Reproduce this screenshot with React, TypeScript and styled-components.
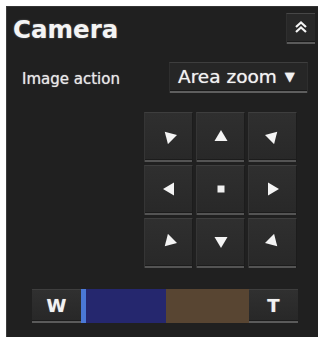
import React from "react";
import styled, { createGlobalStyle } from "styled-components";

const Global = createGlobalStyle`
  html, body { margin: 0; padding: 0; background: #202020; }
  body { overflow: hidden; }
`;

const Frame = styled.div`
  border-top: 6px solid #ffffff;
  border-left: 6px solid #ffffff;
  min-height: 337px;
  box-sizing: border-box;
  background: #202020;
`;

const Panel = styled.div`
  min-height: 331px;
  box-sizing: border-box;
  background: #202020;
  border-left: 1px solid #3c3c3c;
  border-top: 1px solid #343434;
  display: flex;
  flex-direction: column;
  width: 312px;
  font-family: "DejaVu Sans", Verdana, sans-serif;
  color: #f2f2f2;
`;

const Header = styled.div`
  display: flex;
  justify-content: space-between;
  align-items: flex-start;
  padding: 6px 3px 0 6px;
`;

const Title = styled.div`
  margin-top: 5px;
  font-size: 24.5px;
  line-height: 24px;
  font-weight: bold;
  color: #f4f4f4;
  text-shadow: 0 0 2px rgba(255, 255, 255, 0.35);
`;

const Collapse = styled.div`
  width: 29px;
  height: 31px;
  box-sizing: border-box;
  background: #282828;
  border-top: 1px solid #474747;
  border-left: 1px solid #2f2f2f;
  box-shadow: inset 0 -2px 0 #5a5a5a, inset 0 -3px 0 #1a1a1a;
  display: flex;
  justify-content: center;
  padding-top: 6px;
`;

const ActionRow = styled.div`
  display: flex;
  align-items: center;
  justify-content: space-between;
  padding: 18px 10px 0 15px;
`;

const Label = styled.div`
  font-size: 15px;
  line-height: 18px;
  color: #e8e8e8;
  margin-top: 2px;
  text-shadow: 0 0 1px rgba(255, 255, 255, 0.7);
`;

const Select = styled.div`
  width: 139px;
  height: 31px;
  box-sizing: border-box;
  background: #262626;
  border-top: 1px solid #3e3e3e;
  border-left: 1px solid #2e2e2e;
  border-right: 1px solid #2e2e2e;
  box-shadow: inset 0 -2px 0 #5e5e5e, inset 0 -3px 0 #1a1a1a;
  display: flex;
  align-items: center;
  padding: 0 0 3px 8px;
  gap: 8px;
  font-size: 18.5px;
  color: #f2f2f2;
  text-shadow: 0 0 1px rgba(255, 255, 255, 0.7);
`;

const Caret = styled.span`
  font-size: 13px;
  line-height: 13px;
`;

const PadRow = styled.div`
  display: flex;
  justify-content: flex-end;
  padding: 19px 21px 0 0;
`;

const Pad = styled.div`
  display: grid;
  grid-template-columns: repeat(3, 49px);
  grid-template-rows: repeat(3, 50px);
  gap: 3px;
`;

const PadButton = styled.div`
  box-sizing: border-box;
  background: linear-gradient(#2f2f2f, #282828);
  border-top: 1px solid #3e3e3e;
  border-left: 1px solid #353535;
  border-right: 1px solid #1c1c1c;
  box-shadow: inset 0 -2px 0 #545454, inset 0 -3px 0 #1c1c1c;
  display: flex;
  align-items: center;
  justify-content: center;
  padding-bottom: 3px;
`;

const ZoomBar = styled.div`
  display: flex;
  height: 34px;
  margin: 21px 0 0 25px;
`;

const ZoomButton = styled.div<{ $w: number }>`
  width: ${(p) => p.$w}px;
  box-sizing: border-box;
  background: linear-gradient(#303030, #272727);
  border-top: 1px solid #3e3e3e;
  box-shadow: inset 0 -2px 0 #5a5a5a, inset 0 -3px 0 #1c1c1c;
  display: flex;
  align-items: center;
  justify-content: center;
  padding-bottom: 3px;
  font-size: 18px;
  font-weight: bold;
  color: #f2f2f2;
  text-shadow: 0 0 1px rgba(255, 255, 255, 0.5);
`;

const Segment = styled.div<{ $w: number; $c: string; $edge?: string }>`
  width: ${(p) => p.$w}px;
  background: ${(p) => p.$c};
  border-left: ${(p) => (p.$edge ? `5px solid ${p.$edge}` : "none")};
  box-sizing: border-box;
`;

const Tri = ({ rot }: { rot: number }) => (
  <svg width="16" height="16" viewBox="-8 -8 16 16">
    <polygon
      points="0,-6 6.5,5 -6.5,5"
      fill="#f4f4f4"
      transform={`rotate(${rot})`}
    />
  </svg>
);

const Dot = () => (
  <svg width="8" height="8" viewBox="0 0 8 8">
    <rect x="0.5" y="0.5" width="7" height="7" fill="#f0f0f0" />
  </svg>
);

const ChevUp = () => (
  <svg width="14" height="14" viewBox="0 0 14 14">
    <path
      d="M2 7 L7 2.5 L12 7 M2 12 L7 7.5 L12 12"
      fill="none"
      stroke="#f4f4f4"
      strokeWidth="2.2"
    />
  </svg>
);

const pad: Array<number | null> = [-45, 0, 45, -90, null, 90, -135, 180, 135];

export default function App() {
  return (
    <>
      <Global />
      <Frame>
        <Panel>
          <Header>
            <Title>Camera</Title>
            <Collapse>
              <ChevUp />
            </Collapse>
          </Header>
          <ActionRow>
            <Label>Image action</Label>
            <Select>
              <span>Area zoom</span>
              <Caret>▼</Caret>
            </Select>
          </ActionRow>
          <PadRow>
            <Pad>
              {pad.map((r, i) => (
                <PadButton key={i}>{r === null ? <Dot /> : <Tri rot={r} />}</PadButton>
              ))}
            </Pad>
          </PadRow>
          <ZoomBar>
            <ZoomButton $w={49}>W</ZoomButton>
            <Segment $w={85} $c="#25276e" $edge="#4a78d6" />
            <Segment $w={83} $c="#584532" />
            <ZoomButton $w={49}>T</ZoomButton>
          </ZoomBar>
        </Panel>
      </Frame>
    </>
  );
}
